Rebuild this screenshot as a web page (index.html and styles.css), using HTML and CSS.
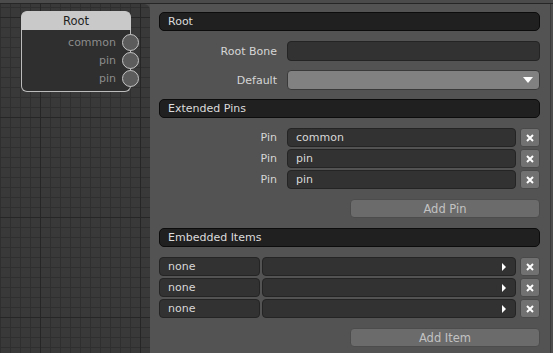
FILE: index.html
```html
<!DOCTYPE html>
<html lang="en">
<head>
    <meta charset="UTF-8">
    <title>Root Node</title>
    <link rel="stylesheet" href="styles.css">
</head>
<body>
<div class="topbar"></div>
<div class="workspace">
    <div class="canvas">
        <div class="node">
            <div class="node-title">Root</div>
            <div class="node-body">
                <div class="node-pin"><span>common</span><i class="socket"></i></div>
                <div class="node-pin"><span>pin</span><i class="socket"></i></div>
                <div class="node-pin"><span>pin</span><i class="socket"></i></div>
            </div>
        </div>
    </div>

    <div class="inspector">
        <div class="section-title">Root</div>
        <div class="field-row">
            <label>Root Bone</label>
            <div class="field"></div>
        </div>
        <div class="field-row">
            <label>Default</label>
            <div class="field dropdown">
                <svg width="10" height="6" viewBox="0 0 10 6"><path d="M0 0h10L5 6z" fill="#fff"/></svg>
            </div>
        </div>

        <div class="section-title">Extended Pins</div>
        <div class="list">
            <div class="pin-row">
                <label>Pin</label>
                <div class="field text">common</div>
                <button class="remove"><svg width="8" height="8" viewBox="0 0 8 8"><path d="M1 1l6 6M7 1l-6 6" stroke="#fff" stroke-width="2"/></svg></button>
            </div>
            <div class="pin-row">
                <label>Pin</label>
                <div class="field text">pin</div>
                <button class="remove"><svg width="8" height="8" viewBox="0 0 8 8"><path d="M1 1l6 6M7 1l-6 6" stroke="#fff" stroke-width="2"/></svg></button>
            </div>
            <div class="pin-row">
                <label>Pin</label>
                <div class="field text">pin</div>
                <button class="remove"><svg width="8" height="8" viewBox="0 0 8 8"><path d="M1 1l6 6M7 1l-6 6" stroke="#fff" stroke-width="2"/></svg></button>
            </div>
        </div>
        <button class="add-button">Add Pin</button>

        <div class="section-title">Embedded Items</div>
        <div class="list">
            <div class="item-row">
                <div class="field text name">none</div>
                <div class="field picker"><svg width="4" height="8" viewBox="0 0 4 8"><path d="M0 0l4 4-4 4z" fill="#fff"/></svg></div>
                <button class="remove"><svg width="8" height="8" viewBox="0 0 8 8"><path d="M1 1l6 6M7 1l-6 6" stroke="#fff" stroke-width="2"/></svg></button>
            </div>
            <div class="item-row">
                <div class="field text name">none</div>
                <div class="field picker"><svg width="4" height="8" viewBox="0 0 4 8"><path d="M0 0l4 4-4 4z" fill="#fff"/></svg></div>
                <button class="remove"><svg width="8" height="8" viewBox="0 0 8 8"><path d="M1 1l6 6M7 1l-6 6" stroke="#fff" stroke-width="2"/></svg></button>
            </div>
            <div class="item-row">
                <div class="field text name">none</div>
                <div class="field picker"><svg width="4" height="8" viewBox="0 0 4 8"><path d="M0 0l4 4-4 4z" fill="#fff"/></svg></div>
                <button class="remove"><svg width="8" height="8" viewBox="0 0 8 8"><path d="M1 1l6 6M7 1l-6 6" stroke="#fff" stroke-width="2"/></svg></button>
            </div>
        </div>
        <button class="add-button">Add Item</button>
    </div>

    <div class="sidebar"></div>
</div>
</body>
</html>
```

FILE: styles.css
```css
/* Node editor layout */
body {
    margin: 0;
    width: 553px;
    height: 353px;
    overflow: hidden;
    background: #4b4b4b;
    font-family: 'DejaVu Sans', Verdana, sans-serif;
    font-size: 11px;
}

.topbar {
    height: 3px;
    border-bottom: 1px solid #262626;
}

.workspace {
    display: flex;
    height: 349px;
}

/* Graph canvas */
.canvas {
    position: relative;
    width: 150px;
    flex-shrink: 0;
    border-top-right-radius: 6px;
    background-color: #393939;
    background-image:
        linear-gradient(to right, #262626 1px, transparent 1px),
        linear-gradient(to bottom, #262626 1px, transparent 1px),
        linear-gradient(to right, #2f2f2f 1px, transparent 1px),
        linear-gradient(to bottom, #2f2f2f 1px, transparent 1px);
    background-size: 100px 100px, 100px 100px, 10px 10px, 10px 10px;
    background-position: 40px 0, 0 13px, 0 0, 0 3px;
}

.node {
    position: absolute;
    left: 21px;
    top: 7px;
    width: 110px;
}

.node-title {
    height: 18px;
    line-height: 18px;
    text-align: center;
    color: #1e1e1e;
    background: #c9c9c9;
    border: 1px solid #c9c9c9;
    border-bottom: none;
    border-radius: 6px 6px 0 0;
    font-size: 11.5px;
}

.node-body {
    height: 62px;
    background: #2f2f2f;
    border: 1px solid #bcbcbc;
    border-top: none;
    border-radius: 0 0 6px 6px;
    padding-top: 3px;
    box-sizing: border-box;
}

.node-pin {
    display: flex;
    justify-content: flex-end;
    align-items: center;
    height: 18px;
    color: #8c8c8c;
    margin-right: -9px;
}

.node-pin span {
    margin-right: 6px;
}

.socket {
    width: 15px;
    height: 15px;
    border-radius: 50%;
    background: #5c5c5c;
    border: 1px solid #c4c4c4;
}

/* Inspector panel */
.inspector {
    width: 381px;
    flex-shrink: 0;
    background: #535353;
    padding: 8px 10px 0 9px;
    display: flex;
    flex-direction: column;
}

.section-title {
    flex-shrink: 0;
    height: 17px;
    line-height: 17px;
    padding-left: 8px;
    color: #dcdcdc;
    background: #202020;
    border: 1px solid #0c0c0c;
    border-radius: 5px;
    margin-bottom: 10px;
}

.field-row {
    display: flex;
    align-items: center;
    gap: 10px;
    margin-bottom: 9px;
}

.field-row label,
.pin-row label {
    width: 118px;
    text-align: right;
    color: #d6d6d6;
}

.field {
    flex: 1;
    height: 18px;
    box-sizing: border-box;
    background: #323232;
    border: 1px solid #242424;
    border-radius: 4px;
    color: #d8d8d8;
}

.field-row .field {
    height: 20px;
}

.dropdown {
    background: #818181;
    border-color: #3a3a3a;
    display: flex;
    align-items: center;
    justify-content: flex-end;
    padding-right: 6px;
}

.list {
    display: flex;
    flex-direction: column;
    gap: 2px;
    margin-bottom: 10px;
}

.pin-row,
.item-row {
    display: flex;
    align-items: center;
    height: 19px;
    flex-shrink: 0;
}

.pin-row label {
    margin-right: 10px;
}

.field.text {
    height: 19px;
    line-height: 17px;
    padding-left: 8px;
}

.item-row .name {
    flex: 0 0 101px;
    margin-right: 2px;
}

.picker {
    height: 19px;
    display: flex;
    align-items: center;
    justify-content: flex-end;
    padding-right: 9px;
}

.remove {
    width: 20px;
    height: 19px;
    margin-left: 4px;
    padding: 0;
    border: 1px solid #4a4a4a;
    border-radius: 3px;
    background: #717171;
    display: flex;
    align-items: center;
    justify-content: center;
}

.add-button {
    flex-shrink: 0;
    align-self: flex-end;
    width: 190px;
    height: 19px;
    padding: 0;
    margin-bottom: 10px;
    font-family: 'DejaVu Sans', Verdana, sans-serif;
    font-size: 11.5px;
    color: #c2c2c2;
    background: #6b6b6b;
    border: 1px solid #4c4c4c;
    border-radius: 4px;
}

.sidebar {
    flex: 1;
    border-left: 1px solid #3c3c3c;
    background: #4e4e4e;
}
```
